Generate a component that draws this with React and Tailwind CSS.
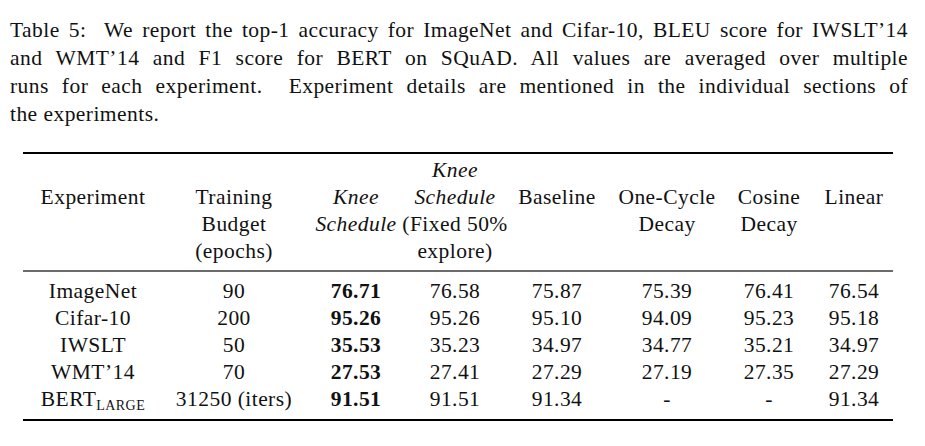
const captionLines = [
  'Table 5:\u00a0 We report the top-1 accuracy for ImageNet and Cifar-10, BLEU score for IWSLT\u201914',
  'and WMT\u201914 and F1 score for BERT on SQuAD. All values are averaged over multiple',
  'runs for each experiment.\u00a0 Experiment details are mentioned in the individual sections of',
]

const columns = [
  { w: 'w-[140px]', lines: ['Experiment'] },
  { w: 'w-[142px]', lines: ['Training', 'Budget', '(epochs)'] },
  { w: 'w-[102px]', lines: ['Knee', 'Schedule'], italic: [0, 1] },
  { w: 'w-[96px]', lines: ['Knee', 'Schedule', '(Fixed 50%', 'explore)'], italic: [0, 1], top: true },
  { w: 'w-[108px]', lines: ['Baseline'] },
  { w: 'w-[112px]', lines: ['One-Cycle', 'Decay'] },
  { w: 'w-[92px]', lines: ['Cosine', 'Decay'] },
  { w: 'w-[78px]', lines: ['Linear'] },
]

const rows = [
  ['ImageNet', '90', '76.71', '76.58', '75.87', '75.39', '76.41', '76.54'],
  ['Cifar-10', '200', '95.26', '95.26', '95.10', '94.09', '95.23', '95.18'],
  ['IWSLT', '50', '35.53', '35.23', '34.97', '34.77', '35.21', '34.97'],
  ['WMT\u201914', '70', '27.53', '27.41', '27.29', '27.19', '27.35', '27.29'],
  ['BERT', '31250 (iters)', '91.51', '91.51', '91.34', '-', '-', '91.34'],
]

export default function App() {
  return (
    <div className="w-[925px] h-[446px] bg-white text-[#111] [font-family:'Liberation_Serif',serif] text-[21.5px] tracking-[0.45px] overflow-hidden">
      {/* Caption */}
      <div className="pl-[10px] pt-[16px] w-[908px] leading-[28px]">
        {captionLines.map((line, i) => (
          <div key={i} className="text-justify [text-align-last:justify]">
            {line}
          </div>
        ))}
        <div>the experiments.</div>
      </div>

      {/* Table */}
      <div className="ml-[23px] mt-[24px] w-[870px]">
        <div className="h-[2px] bg-black" />
        <div className="flex pt-[3px] pb-[5px] leading-[27px]">
          {columns.map((col, i) => (
            <div key={i} className={`${col.w} flex flex-col items-center text-center whitespace-nowrap ${col.top ? '' : 'pt-[27px]'}`}>
              {col.lines.map((l, j) => (
                <div key={j} className={col.italic && col.italic.includes(j) ? 'italic' : ''}>
                  {l}
                </div>
              ))}
            </div>
          ))}
        </div>
        <div className="h-[2px] bg-[#6b6b6b]" />
        <div className="pt-[6px] pb-[4px] leading-[27px]">
          {rows.map((r, i) => (
            <div key={i} className="flex">
              {r.map((cell, j) => (
                <div
                  key={j}
                  className={`${columns[j].w} text-center whitespace-nowrap ${j === 2 ? 'font-bold' : ''}`}
                >
                  {cell}
                  {i === 4 && j === 0 && (
                    <span className="text-[14px] uppercase relative top-[4px]">large</span>
                  )}
                </div>
              ))}
            </div>
          ))}
        </div>
        <div className="h-[2px] bg-black" />
      </div>
    </div>
  )
}
